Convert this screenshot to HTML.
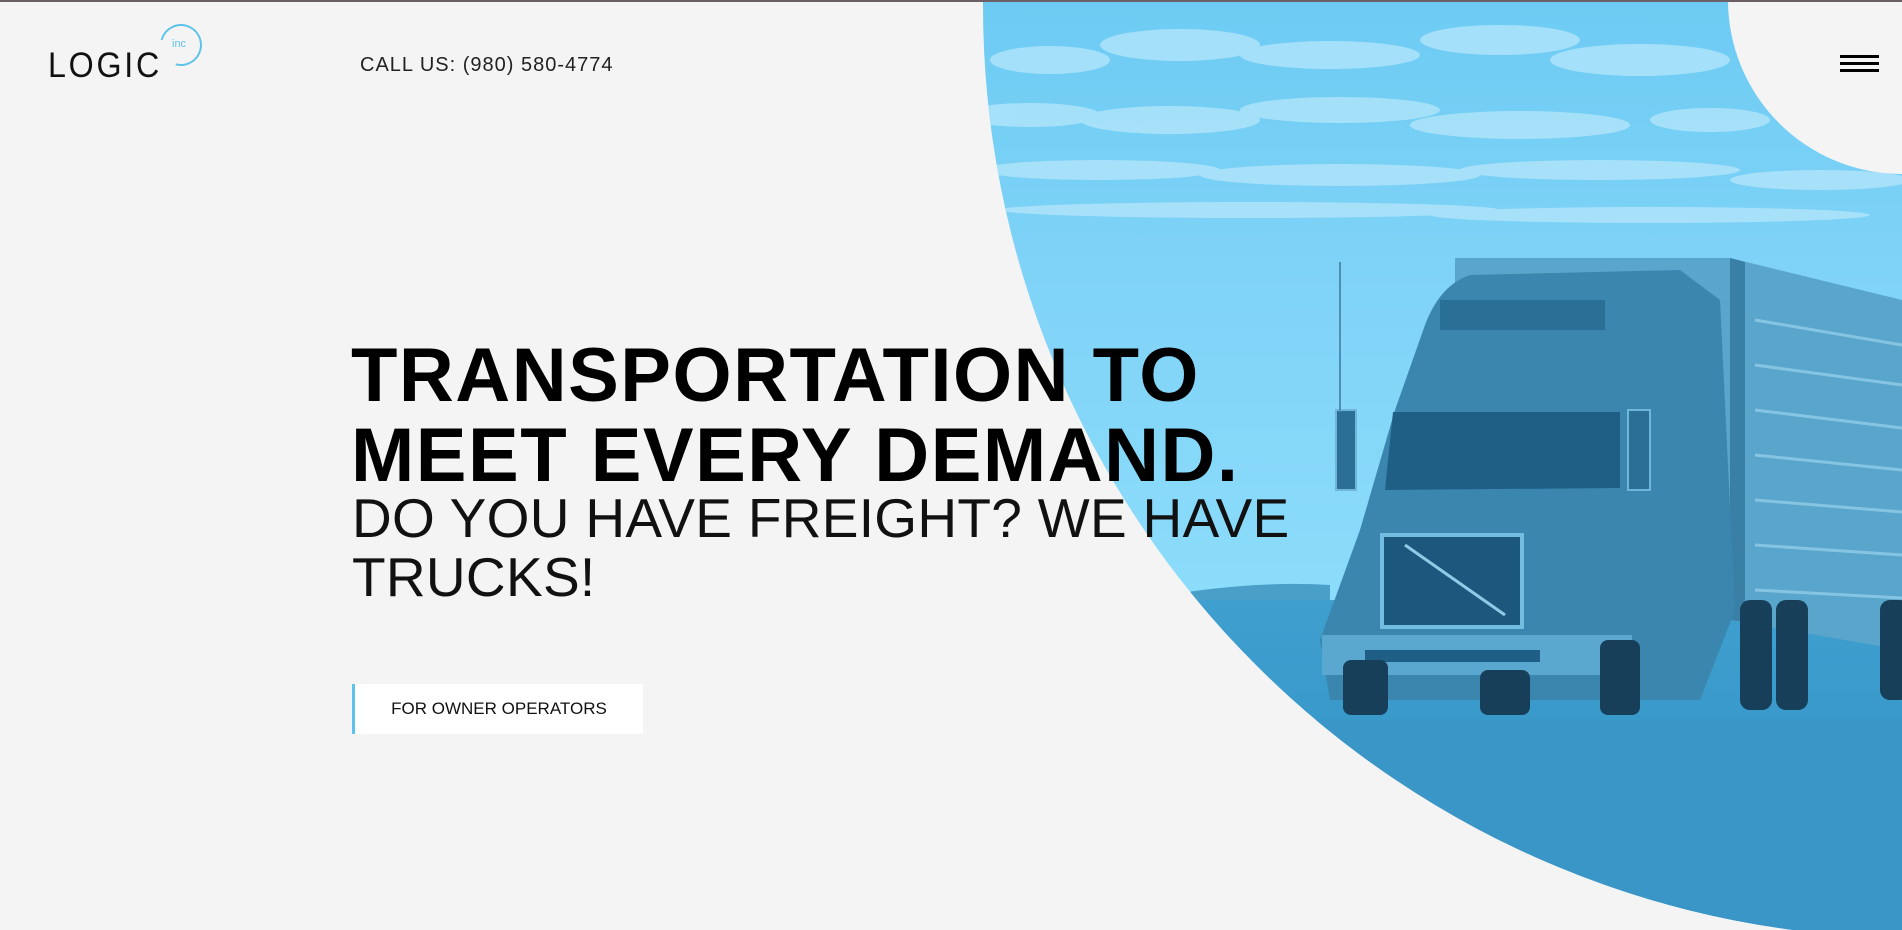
<!DOCTYPE html>
<html><head><meta charset="utf-8">
<style>
html,body{margin:0;padding:0;}
body{width:1902px;height:930px;overflow:hidden;background:#f4f4f4;position:relative;font-family:"Liberation Sans",sans-serif;}
.topbar{position:absolute;left:0;top:0;width:1902px;height:2px;background:#6b5f66;z-index:5}
svg.bg{position:absolute;left:0;top:0}
.logo{position:absolute;left:48px;top:46px;font-size:35px;letter-spacing:3px;color:#111;transform:scaleX(0.92);transform-origin:left}
.ring{position:absolute;left:160px;top:24px;width:38px;height:38px;border:2px solid #5cc3ea;border-radius:50%;border-left-color:transparent;border-bottom-color:#5cc3ea;transform:rotate(-30deg)}
.inc{position:absolute;left:172px;top:38px;font-size:11px;color:#5cc3ea}
.call{position:absolute;left:360px;top:54px;font-size:20px;color:#222;letter-spacing:1px}
.burger{position:absolute;left:1840px;top:55px;width:39px}
.burger div{height:3px;background:#000;margin-bottom:4px}
h1{position:absolute;left:351px;top:336px;margin:0;font-size:76px;line-height:80px;font-weight:bold;color:#000;letter-spacing:1.5px}
.sub{position:absolute;left:352px;top:489px;font-size:55px;line-height:59px;color:#111;letter-spacing:0.3px}
.btn{position:absolute;left:352px;top:684px;width:288px;height:50px;background:#fff;border-left:3px solid #5cc3ea;font-size:17px;line-height:50px;text-align:center;color:#111}
</style></head><body>
<div class="topbar"></div>
<svg class="bg" width="1902" height="930" viewBox="0 0 1902 930">
<defs>
<clipPath id="c"><circle cx="1915" cy="6" r="932"/></clipPath>
<linearGradient id="sky" x1="0" y1="0" x2="0" y2="1">
<stop offset="0" stop-color="#6dcbf3"/><stop offset="0.45" stop-color="#7fd3f7"/><stop offset="1" stop-color="#8cdcfb"/></linearGradient>
<linearGradient id="gr" x1="0" y1="0" x2="0" y2="1">
<stop offset="0" stop-color="#3f9fcf"/><stop offset="1" stop-color="#2e8fc2"/></linearGradient>
</defs>
<g clip-path="url(#c)">
<rect x="900" y="0" width="1002" height="600" fill="url(#sky)"/>
<g fill="#b6e7fb" opacity="0.75">
<ellipse cx="1050" cy="60" rx="60" ry="14"/><ellipse cx="1180" cy="45" rx="80" ry="16"/><ellipse cx="1330" cy="55" rx="90" ry="14"/><ellipse cx="1500" cy="40" rx="80" ry="15"/><ellipse cx="1640" cy="60" rx="90" ry="16"/>
<ellipse cx="1030" cy="115" rx="70" ry="12"/><ellipse cx="1170" cy="120" rx="90" ry="14"/><ellipse cx="1340" cy="110" rx="100" ry="13"/><ellipse cx="1520" cy="125" rx="110" ry="14"/><ellipse cx="1710" cy="120" rx="60" ry="12"/>
<ellipse cx="1100" cy="170" rx="120" ry="10"/><ellipse cx="1340" cy="175" rx="140" ry="11"/><ellipse cx="1600" cy="170" rx="140" ry="10"/><ellipse cx="1820" cy="180" rx="90" ry="10"/>
<ellipse cx="1250" cy="210" rx="250" ry="8"/><ellipse cx="1650" cy="215" rx="220" ry="8"/>
</g>
<path d="M1150 598 Q1250 580 1330 585 L1330 640 L1150 640Z" fill="#4a9fc8"/>
<rect x="900" y="600" width="1002" height="340" fill="url(#gr)"/>
<rect x="900" y="720" width="1002" height="220" fill="#3b96c8"/>
<!-- trailer -->
<path d="M1455 258 L1730 258 L1902 300 L1902 650 L1730 620 L1455 610Z" fill="#5aa5cb"/>
<path d="M1730 258 L1745 262 L1745 622 L1730 620Z" fill="#3a7fa5"/>
<g stroke="#85c5e3" stroke-width="3">
<line x1="1755" y1="320" x2="1902" y2="345"/><line x1="1755" y1="365" x2="1902" y2="385"/><line x1="1755" y1="410" x2="1902" y2="428"/><line x1="1755" y1="455" x2="1902" y2="470"/><line x1="1755" y1="500" x2="1902" y2="512"/><line x1="1755" y1="545" x2="1902" y2="555"/><line x1="1755" y1="590" x2="1902" y2="598"/></g>
<!-- cab -->
<path d="M1425 325 Q1440 285 1470 275 L1680 270 L1720 300 L1735 610 L1700 700 L1330 700 L1320 640 L1360 530 L1395 410Z" fill="#3a86ae"/>
<rect x="1440" y="300" width="165" height="30" fill="#2a6f96"/>
<path d="M1393 412 L1620 412 L1620 488 L1385 490Z" fill="#1f5e85"/>
<rect x="1382" y="535" width="140" height="92" fill="#1c587e" stroke="#73bde0" stroke-width="4"/>
<line x1="1405" y1="545" x2="1505" y2="615" stroke="#8fcbe6" stroke-width="3"/>
<rect x="1322" y="635" width="310" height="40" fill="#5aa7cf"/>
<rect x="1365" y="650" width="175" height="12" fill="#1f5e85"/>
<rect x="1336" y="410" width="20" height="80" fill="#2b6e96" stroke="#6fb6da" stroke-width="2"/>
<rect x="1628" y="410" width="22" height="80" fill="#2b6e96" stroke="#6fb6da" stroke-width="2"/>
<rect x="1339" y="262" width="2" height="150" fill="#4b8fb5"/>
<g fill="#173f5a">
<rect x="1343" y="660" width="45" height="55" rx="8"/><rect x="1480" y="670" width="50" height="45" rx="8"/>
<rect x="1600" y="640" width="40" height="75" rx="8"/><rect x="1740" y="600" width="32" height="110" rx="10"/>
<rect x="1776" y="600" width="32" height="110" rx="10"/><rect x="1880" y="600" width="30" height="100" rx="10"/></g>
</g>
<circle cx="1902" cy="0" r="174" fill="#f4f4f4"/>
</svg>
<div class="logo">LOGIC</div>
<div class="ring"></div>
<div class="inc">inc</div>
<div class="call">CALL US: (980) 580-4774</div>
<div class="burger"><div></div><div></div><div></div></div>
<h1>TRANSPORTATION TO<br>MEET EVERY DEMAND.</h1>
<div class="sub">DO YOU HAVE FREIGHT? WE HAVE<br>TRUCKS!</div>
<div class="btn">FOR OWNER OPERATORS</div>
</body></html>
